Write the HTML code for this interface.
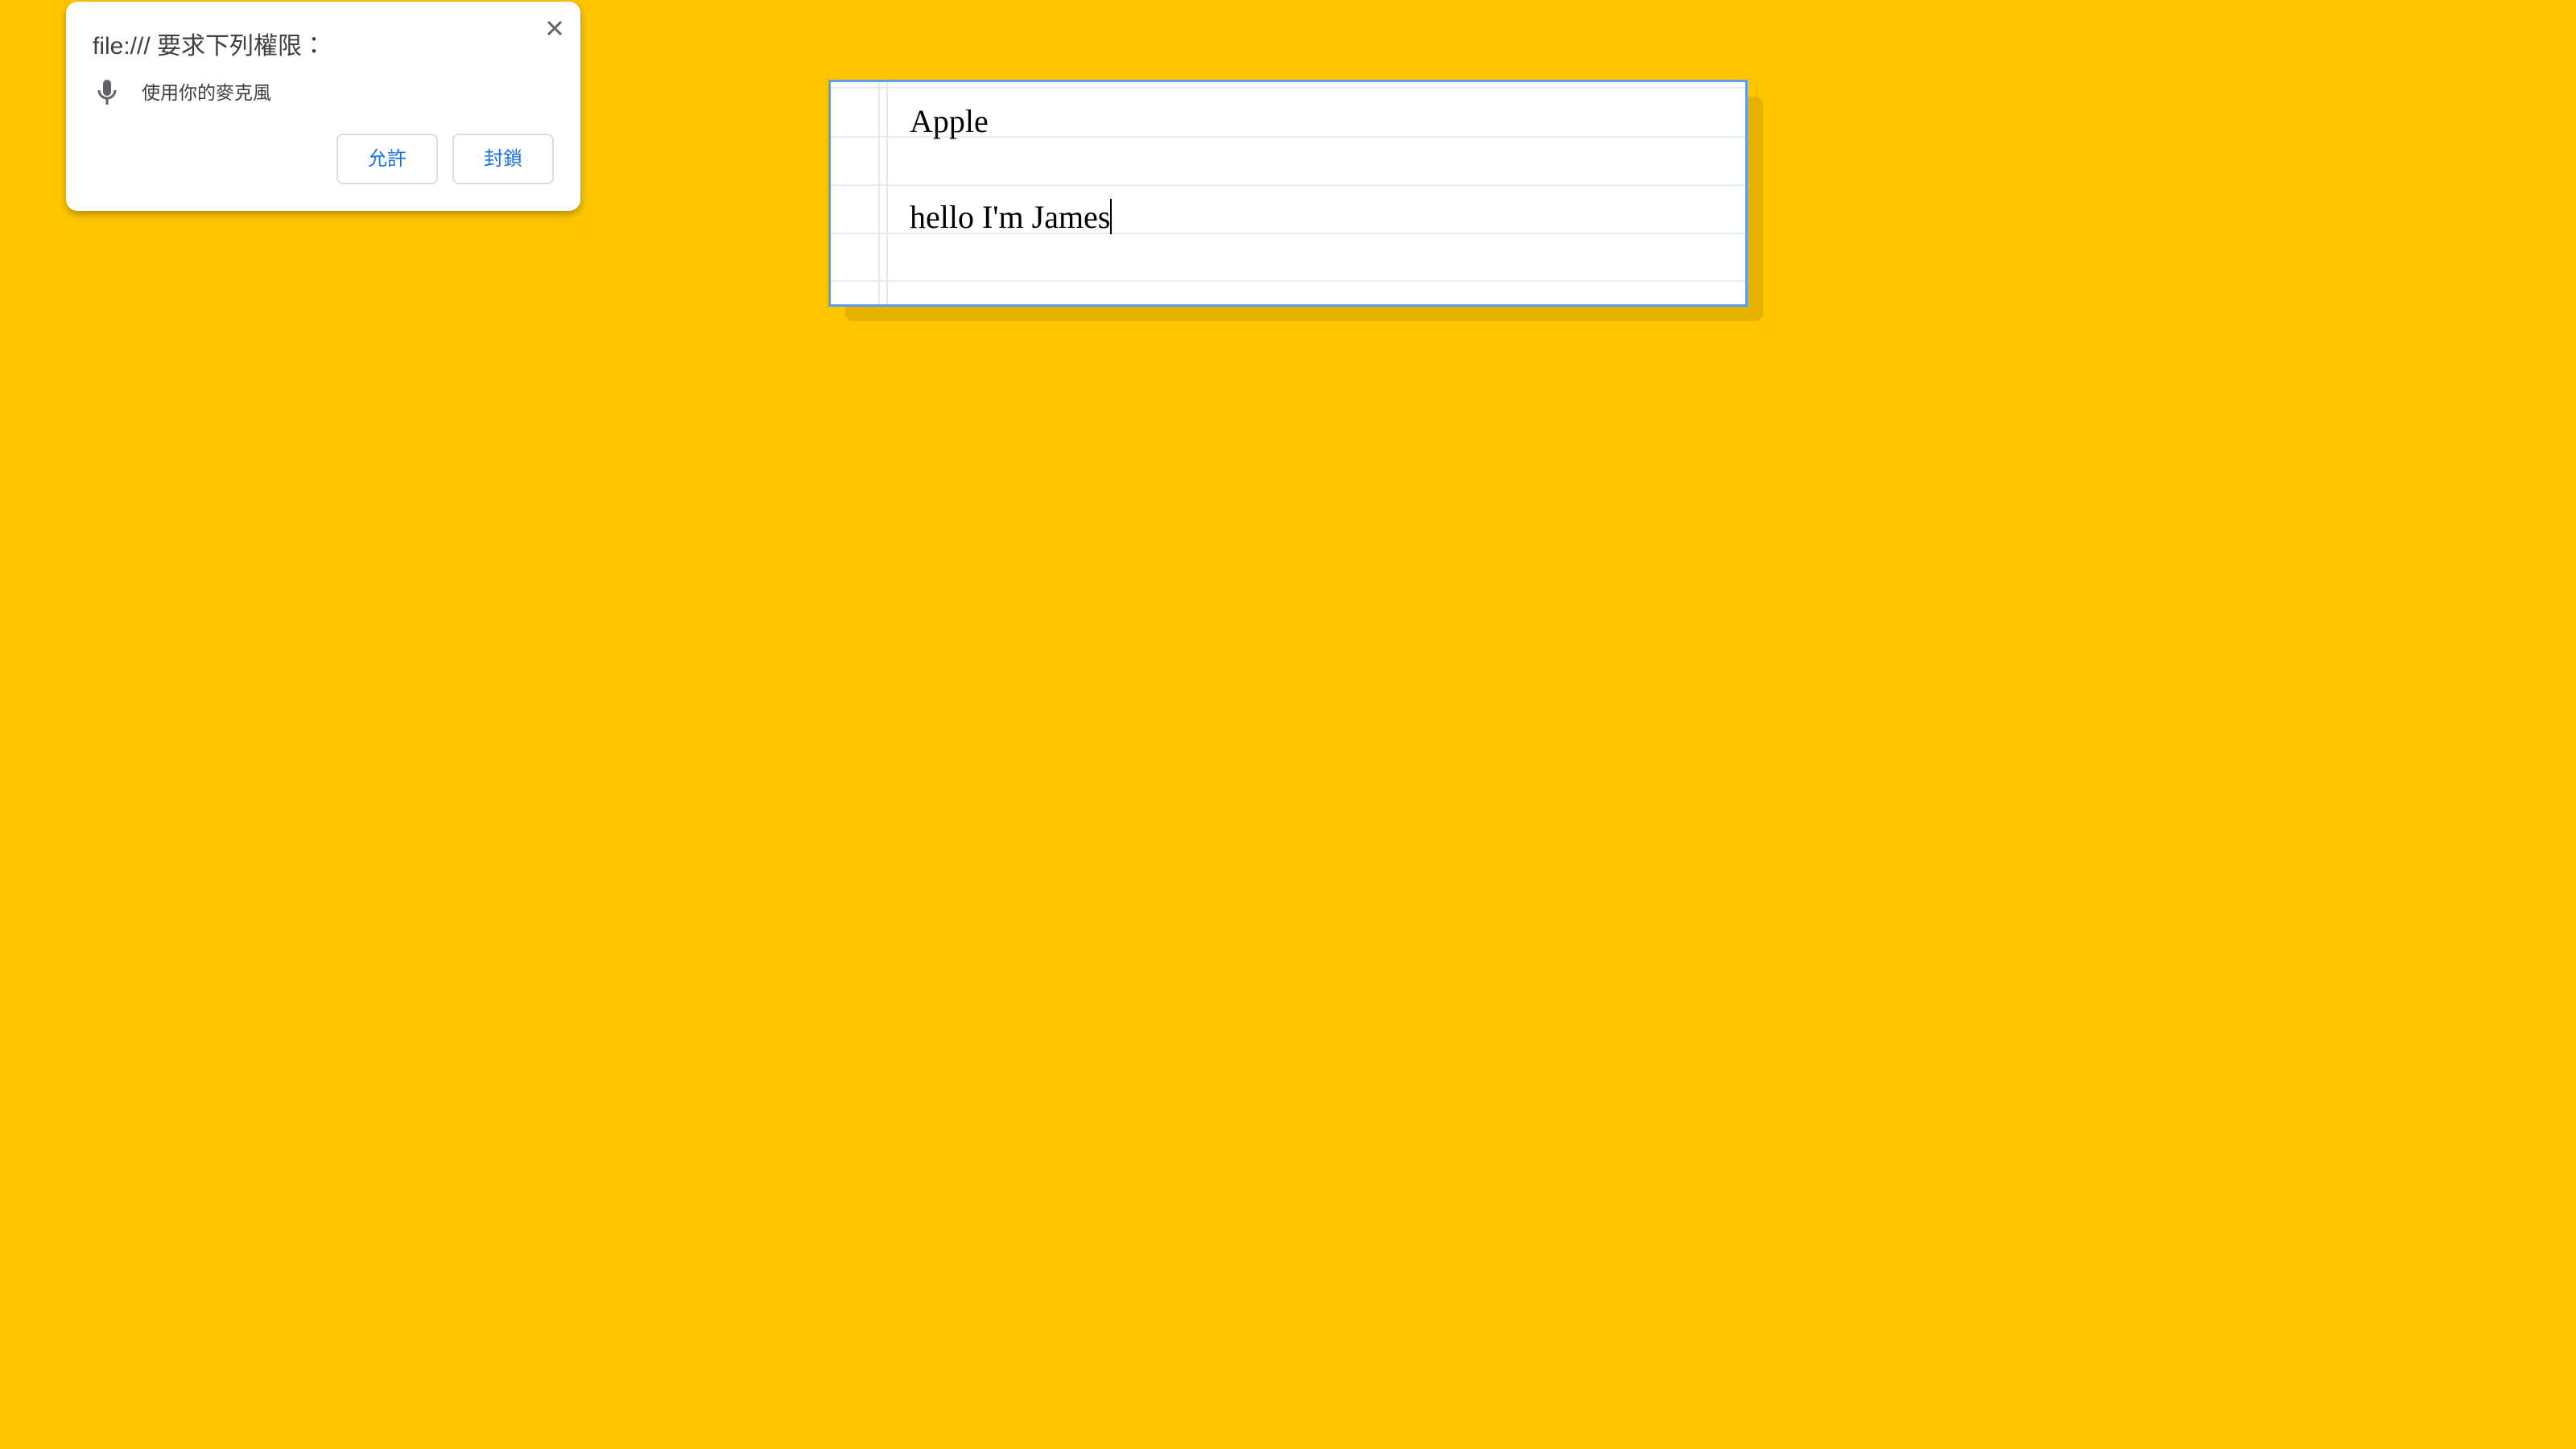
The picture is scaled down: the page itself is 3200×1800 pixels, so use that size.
<!DOCTYPE html>
<html><head><meta charset="utf-8">
<style>
html,body{margin:0;padding:0;}
body{width:3200px;height:1800px;background:#ffc600;position:relative;overflow:hidden;font-family:"Liberation Sans","Noto Sans CJK TC",sans-serif;}
.pop{position:absolute;left:82px;top:2px;width:639px;height:260px;background:#fff;border-radius:14px;box-shadow:0 4px 10px rgba(0,0,0,0.3);}
.title{position:absolute;left:33px;top:30px;font-size:30px;color:#3c4043;white-space:nowrap;}
.perm{position:absolute;left:94px;top:94px;font-size:23px;color:#3c4043;white-space:nowrap;}
.btn{position:absolute;top:164px;width:126px;height:63px;border:2px solid #dadce0;border-radius:8px;box-sizing:border-box;color:#1a73e8;font-size:24px;text-align:center;line-height:60px;}
.close{position:absolute;left:596px;top:22px;}
.shadow{position:absolute;left:1050px;top:120px;width:1140px;height:279px;background:#e6b200;border-radius:10px;}
.card{position:absolute;left:1029px;top:99px;width:1142px;height:282px;box-sizing:border-box;border:3px solid #5b9cf5;background:#fff;overflow:hidden;}
.hl{position:absolute;left:0;right:0;height:2px;background:#e3eef8;}
.vl{position:absolute;top:0;bottom:0;width:2px;background:#f0e4e4;}
.t{position:absolute;left:98px;font-family:"Liberation Serif",serif;font-size:40px;color:#000;white-space:nowrap;}
.cur{display:inline-block;width:2px;height:44px;background:#000;vertical-align:-8px;}
</style></head><body>
<div class="pop">
  <div class="title">file:/// 要求下列權限：</div>
  <svg style="position:absolute;left:38px;top:95px" width="26" height="34" viewBox="0 0 26 34">
    <rect x="8" y="2" width="10" height="20" rx="5" fill="#5f6368"/>
    <path d="M3 15 a10 10 0 0 0 20 0" fill="none" stroke="#5f6368" stroke-width="3"/>
    <rect x="11.5" y="24" width="3" height="9" fill="#5f6368"/>
  </svg>
  <div class="perm">使用你的麥克風</div>
  <div class="btn" style="left:336px">允許</div>
  <div class="btn" style="left:480px">封鎖</div>
  <svg class="close" width="22" height="22" viewBox="0 0 22 22"><path d="M3 3L19 19M19 3L3 19" stroke="#5f6368" stroke-width="3"/></svg>
</div>
<div class="shadow"></div>
<div class="card">
  <div class="hl" style="top:6px"></div>
  <div class="hl" style="top:67px"></div>
  <div class="hl" style="top:127px"></div>
  <div class="hl" style="top:187px"></div>
  <div class="hl" style="top:246px"></div>
  <div class="vl" style="left:59px"></div>
  <div class="vl" style="left:69px"></div>
  <div class="t" style="top:25px">Apple</div>
  <div class="t" style="top:144px">hello I'm James<span class="cur"></span></div>
</div>
</body></html>
